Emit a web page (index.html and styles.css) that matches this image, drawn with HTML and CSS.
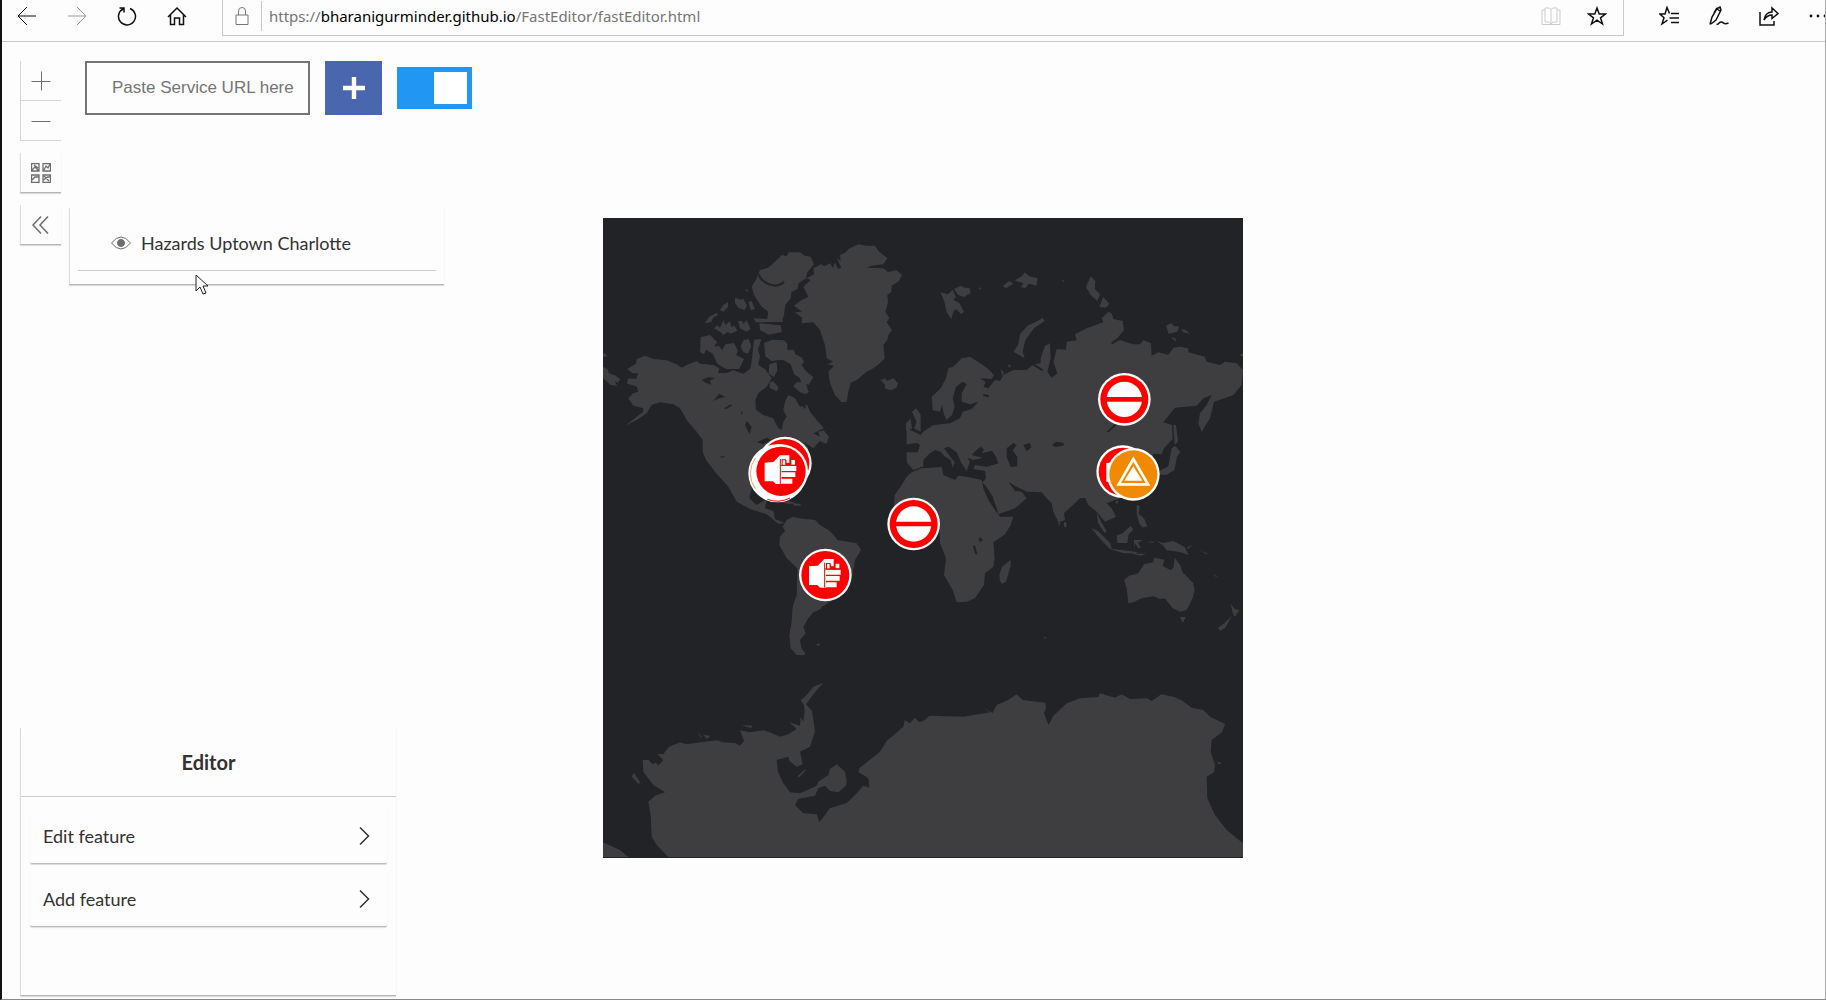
FILE: index.html
```html
<!DOCTYPE html>
<html lang="en">
<head>
<meta charset="utf-8">
<title>Fast Editor</title>
<meta name="viewport" content="width=device-width, initial-scale=1">
<link rel="stylesheet" href="styles.css">
</head>
<body>
<div class="window">
  <header class="toolbar">
    <nav class="nav-buttons" aria-label="Navigation">
      <button class="tool" type="button" aria-label="Back"><svg class="icon" viewBox="0 0 20 20"><path d="M19 10H1M10 1L1 10l9 9"/></svg></button>
      <button class="tool faded" type="button" aria-label="Forward"><svg class="icon" viewBox="0 0 20 20"><path d="M1 10h18M10 1l9 9-9 9"/></svg></button>
      <button class="tool" type="button" aria-label="Refresh"><svg class="icon" viewBox="0 0 20 20"><path class="bold" d="M13 2.500a8.500 8.500 0 1 1-6.500 .2M2.500 2h4.500v4.500"/></svg></button>
      <button class="tool" type="button" aria-label="Home"><svg class="icon" viewBox="0 0 20 20"><path class="bold" d="M1 11l9-9 9 9M3.500 9v9.500h4v-6.500h5v6.500h4V9"/></svg></button>
    </nav>
    <div class="address">
      <svg class="icon lock" viewBox="0 0 20 20"><path d="M4 9h12v9.500H4zM6.500 9V5a3.500 3.500 0 0 1 7 0v4"/></svg>
      <a class="url" href="https://bharanigurminder.github.io/FastEditor/fastEditor.html">https://<span class="host">bharanigurminder.github.io</span>/FastEditor/fastEditor.html</a>
      <button class="tool pale" type="button" aria-label="Reading view"><svg class="icon" viewBox="0 0 20 20"><path d="M10 3.500v15M10 3.500L8 2H4v14h4l2 2 2-2h4V2h-4zM4 4H1v14.500h18V4h-3"/></svg></button>
      <button class="tool favorite" type="button" aria-label="Add to favorites"><svg class="icon" viewBox="0 0 20 20"><path class="bold" d="M10 2l2.200 6H18.500l-5 3.800 2 6.200-5.500-3.800L4.500 18l2-6.200-5-3.800h6.300z"/></svg></button>
    </div>
    <div class="actions">
      <button class="tool" type="button" aria-label="Favorites"><svg class="icon" viewBox="0 0 20 20"><path class="bold" d="M12 7.500h8M10.500 12H20M12 16.500h8M10.500 7.500L8 1.500 6 8H0.800l4.200 3.800-2 6.200 5.500-3.800"/></svg></button>
      <button class="tool" type="button" aria-label="Add notes"><svg class="icon" viewBox="0 0 20 20"><path class="bold" d="M1 18.500L3 11 8 2.500l3-1.500 1 3-5 10-5 4M8 3l3 2M5 7l3-5M7.500 18.500c3 0 2.500-3 5-2.500s2 3 7 1"/></svg></button>
      <button class="tool" type="button" aria-label="Share"><svg class="icon" viewBox="0 0 20 20"><path class="bold" d="M1 6v13h14v-4M5 14c1-5 4-8 8-8V2l6 5.500-6 5V9c-4 0-6 2-8 5z"/></svg></button>
      <button class="tool more" type="button" aria-label="Settings and more"><svg class="icon dots" viewBox="0 0 20 20"><circle cx="3" cy="10" r="1.400"/><circle cx="10" cy="10" r="1.400"/><circle cx="17" cy="10" r="1.400"/></svg></button>
    </div>
  </header>

  <main class="view">
    <svg class="map" viewBox="0 0 1920 1920" role="img" aria-label="World map with hazard markers">
      <rect class="sea" width="1920" height="1920"/>
      <g transform="translate(-9 -9)">
        <path class="land" d="M640 158L650 155 662 148 674 154 690 145 700 160 704 142 714 162 724 158 710 128 722 138 720 120 738 112 745 102 775 88 800 92 825 92 835 108 862 130 850 148 815 152 800 158 850 160 865 172 888 165 907 180 895 200 875 212 874 230 862 240 864 262 856 290 868 310 860 322 876 345 865 360 862 375 850 390 854 430 840 445 820 460 800 470 770 495 752 503 745 530 740 560 725 562 705 540 690 505 685 470 702 452 682 448 700 440 680 430 675 390 668 370 660 345 640 322 605 325 606 308 585 292 606 290 582 272 600 258 625 245 610 215 632 195 620 190 642 178Z"/>
        <path class="land" d="M530 135L545 120 560 124 566 112 600 112 614 122 632 125 642 148 622 172 618 190 596 205 592 222 574 232 572 250 556 270 552 300 545 320 500 320 505 290 485 275 462 240 455 215 470 190 480 165 505 158Z"/>
        <path class="coast" d="M476 178Q485 205 525 212 545 210 552 200"/>
        <path class="land" d="M302 366l28-6 22 22-10 12 16 0 8 12 10-18 26-4 12 24-6 12 24 12-14 30-40 0-26-16-14-30-20-12-6 14-12-6zM314 325l14-20 22-12 4 8-14 6-6 14zM342 340l10-10 8 8 10-22 6 14 14-12 4 18 10-4 8 16-22 8-6-6-14 10-8-8zM370 270l14-8 0 14-14 14-10-4zM405 248l18 6 6-4 12 22-8 14-18-8-10-14zM414 318l12 0 4 8 10-10 12 26-12 8-12-6-8-4zM445 262l10-4 10 24-12 4zM460 310l90 4-2 6-80 2zM478 325l64 6 4 20-40 8-26-14zM430 376l16-4 8 22-10 22-14-4-8-18zM462 374l22-2-10 32 6 20-6 30-20-6zM492 384l24-10 36 2 10 10 0 20 20-2 4 14 20 10 6 14-8 8 16 20 20 16-14 24-8-4 8 26-10 6-16-6-20-18 10-12 14 0-6-14-16-10-10-30-24-14-34 4-18-14z"/>
        <path class="land" d="M508 448l22-6 2 24-10 20-16-10zM508 505l10-8 18 20-6 12-20-10zM435 225l8-4 0 10zM842 496l14-6 4 8 20-8 14 14-4 14-18 8-18-6 2-10zM9 415l10 2 2 8-12 0zM9 455l14 8 4 12 18 6 16 12-8 10-8-4 6 14-20-4-22-20z"/>
        <path class="land" d="M82 462L108 446 110 432 135 422 160 432 200 436 230 448 245 458 265 448 290 438 300 446 340 450 358 460 355 474 380 474 400 466 430 476 450 462 462 420 475 450 495 462 515 490 500 515 475 535 466 555 468 585 490 600 520 610 535 640 545 645 550 620 560 605 550 585 555 560 565 540 585 550 600 575 622 570 630 590 650 615 672 640 640 655 685 680 660 678 640 700 610 680 625 700 580 730 560 770 560 830 548 835 535 810 455 820 448 850 470 870 500 852 495 880 520 888 525 912 555 925 535 926 515 910 500 898 450 882 410 860 385 815 345 770 318 735 308 710 308 675 290 650 262 618 240 580 220 568 180 562 155 570 140 595 112 614 75 632 128 592 130 580 100 572 85 550 100 535 115 530 110 515 80 505 85 490 108 492 115 475 98 475Z"/>
        <path class="land" d="M655 650l16-4 16 20-8 20-16-6zM920 712H970V755H936L920 740zM918 625l14-14 4 30-18 6zM936 590l12-10 14 20 0 50-20-10 8-20z"/>
        <path class="lake" d="M305 495l20-8 20 2-16 8 6 12-18-6zM340 558l18-22 18 10-18 4zM372 580l20-12 4 4-18 10zM435 630l6-12 14 18-6 22zM422 590l6 0-2 10zM360 725l18-2-14 6zM470 682l30-14 14 6-24 14z"/>
        <path class="coast" d="M345 782L385 835M600 540L615 580"/>
        <path class="land" d="M545 860l24-2 20 8-30 0zM580 866l22 0 0 6-20 0z"/>
      </g>
      <g transform="translate(951 -9)">
        <path class="land" d="M62 232l22 6 14-14 10 22-8 8 18 10 14 26-8 8-16-16-8 8-6 22-14-20-6-28zM102 222l20-10 12 6 16 2 2 14-20 12-18-6zM174 218l10 0-4 6zM248 212l20-14 12 8-22 14zM285 196l20-12 10-12 12 12 26 6-4 22-22-6-12 14-12-4 8-12-18-4zM498 216l14-32 14 14-2 24 16 16-8 20-20-18zM538 276l12-30 18 20-10 12zM738 332l16-8 8 10 16 0-6 16-26 6zM784 342l14 4 12 10-20-4zM426 196l6 0 0 6zM752 366l14 4 4 12zM242 460l10 14-6 10zM262 448l12 4-6 6z"/>
        <path class="land" d="M280 410L294 390 300 358 322 332 348 320 368 308 374 318 342 340 316 376 308 410 314 430 294 418Z"/>
        <path class="land" d="M-38 715L-38 745-20 765 0 758 10 735 28 716 45 705 62 710 75 725 92 735 98 758 104 742 84 716 72 700 85 695 110 712 122 740 140 768 150 740 142 728 160 735 190 728 225 722 236 745 200 755 165 750 160 762 195 768 198 790 185 805 205 840 235 898 285 880 320 850 305 830 285 828 265 800 290 815 320 830 365 832 380 850 395 865 400 890 415 922 435 915 432 895 480 850 495 848 505 870 530 890 555 920 588 905 575 880 560 865 600 850 650 820 680 780 690 740 700 716 725 718 732 700 758 672 756 630 730 622 765 578 830 572 850 550 875 540 860 570 840 595 835 625 845 650 870 610 882 560 940 540 965 510 969 465 950 445 915 440 900 450 860 440 855 425 805 412 805 400 780 395 760 398 745 420 715 412 695 422 693 385 670 376 660 388 640 388 600 375 580 385 612 345 608 318 580 312 575 295 565 290 545 310 550 322 500 340 465 358 470 376 440 380 438 404 410 402 400 440 412 475 395 488 382 470 392 430 390 385 375 392 362 430 362 445 340 448 320 465 280 465 250 480 240 498 225 495 205 520 190 515 198 502 180 490 215 492 222 480 205 462 180 445 150 425 125 430 100 455 85 460 78 490 62 520 35 545 38 585 60 590 66 570 72 600 80 615 96 600 104 575 98 550 108 515 128 500 140 508 125 535 125 560 150 568 175 560 155 582 128 590 120 610 90 625 40 630 10 650-15 680 0 690-8 715Z"/>
        <path class="lake" d="M155 720l15-15 12-10 10 8-6 12 30-8 14 22-40 0zM260 700l20-16 10 6-12 16 14 20 0 28-20 2-12-30zM310 690l20-6 4 14-14 10zM396 690l12-10 24 4-2 8-26 4zM560 650l26-24 2 6-22 20zM185 800l12 12 20 30 18 52-16-12-24-44z"/>
        <path class="coast" d="M320 435L368 466M575 386L610 360M190 540L206 544"/>
        <path class="land" d="M760 630l8 0 6 50-10 10zM755 700l10-8 16 18-10 16-8 40-24 14-34-2 20-14 20-10zM415 916l6 10-4 8zM-40 640l22 10 28 14-20 20-30 4zM958 420l12-6v12z"/>
      </g>
      <g transform="translate(411 621)">
        <path class="land" d="M515 142L545 130 575 128 605 125 610 150 645 165 655 152 680 155 725 165 730 190 745 225 765 255 780 275 820 275 812 300 795 328 760 352 764 400 760 425 735 445 732 480 705 520 680 530 650 532 638 495 612 450 618 400 600 355 598 300 560 290 520 300 480 290 462 240 464 210 485 180 500 155ZM135 318L128 305 140 285 160 275 175 280 225 285 240 300 265 315 280 328 292 345 350 355 363 375 345 405 335 460 300 500 270 530 240 550 175 550 172 430 140 400 118 360 120 335Z"/>
        <path class="lake" d="M716 338l8 0 4 10-10 2zM698 360l8 4 6 24-6 0z"/>
      </g>
      <g transform="translate(-9 951)">
        <path class="land" d="M592 120L590 180 578 215 575 260 568 300 572 340 590 360 612 361 616 355 604 340 600 315 617 295 610 275 625 250 640 232 662 222 662 205 650 198 690 160 690 120ZM648 328l12-4-4 10zM94 724l8-10 18 26-4 8zM9 922l50 22 26 22H9zM425 570l32 2-4 8zM292 588l14 20-4 0zM310 600l22 2-12 10z"/>
        <path class="land" d="M205 966L170 930 155 905 152 840 145 800 165 782 195 772 160 750 130 710 128 675 146 675 158 688 168 682 174 692 190 676 172 656 190 658 206 636 240 622 260 628 330 618 352 616 366 622 405 624 420 632 432 618 420 586 450 592 490 586 510 592 540 605 565 598 590 582 568 562 600 572 602 545 610 560 614 530 612 510 602 496 620 480 640 455 670 443 640 478 618 508 636 528 645 590 630 635 600 650 608 688 590 695 568 678 565 665 530 675 534 710 550 745 570 772 600 775 650 752 655 740 685 720 690 702 710 688 735 710 740 738 738 752 715 772 690 768 675 752 655 760 645 782 595 792 585 810 610 835 650 838 658 862 690 820 740 804 765 780 790 752 808 758 806 732 796 724 775 712 778 700 840 650 860 618 910 575 914 555 930 565 945 548 958 562 970 558 988 542 1090 545 1170 532 1145 515 1178 534 1190 510 1225 495 1250 478 1268 495 1336 503 1338 520 1332 535 1346 570 1360 542 1400 505 1440 490 1494 486 1500 475 1545 488 1565 478 1590 492 1640 490 1655 498 1684 478 1720 485 1745 496 1775 518 1810 525 1830 545 1875 567 1866 592 1835 615 1832 650 1845 690 1842 712 1820 725 1822 790 1845 840 1880 885 1929 925V966Z"/>
        <path class="land" d="M592 724l22-20 4 2-20 20z"/>
      </g>
      <g transform="translate(951 951)">
        <path class="land" d="M612 135L628 122 655 115 672 88 700 82 702 68 734 74 728 92 752 106 760 98 764 68 780 90 788 112 820 145 824 165 818 190 800 225 780 230 758 220 735 190 720 192 700 184 665 190 640 202 625 205 620 160ZM780 246l18 0-10 18zM932 206l12 16 14 4-14 20-6-12zM894 278l20-14 22-22-20 36-16 10zM238 120L246 96 272 74 272 92 258 140 246 146 240 138zM370 307l10 0-4 5zM890 680l18 4-12 4z"/>
      </g>
      <g transform="translate(1131 621)">
        <path class="land" d="M334 310l20 8 36 36 6 18 54 6 22 4-4 4-40-2-38-12-26-26zM350 262l14 30 16 26-6 6-20-30zM410 330l16-4 26-24 8 12-14 14-4 26-30 0zM462 345l26 0-14 8 8 16-8 0-8-14-4 12zM530 348l20 6 30-6 34 18 12 24-30-10-36-4-10-14zM470 240l10 4-4 22 16 14 10 24-14 4-10-12-8-30zM252 290l8 4-2 14-6-4zM404 230l12-4-4 12zM460 386l40 0-20 6zM500 350l24 0-4 4zM620 368l18-8-14 12zM700 448l12 6-4 2zM660 376l24 10-4 2z"/>
      </g>

      <g transform="translate(546 736)"><circle class="white" r="80"/><circle class="red" r="73"/></g>
      <g transform="translate(523 766)"><circle class="white" r="87"/><path class="thin-orange" d="M-66-46a78 78 0 0 0 0 92"/><path class="thin-red" d="M-30 78a84 84 0 0 0 68-4"/></g>
      <g transform="translate(534 760)"><circle class="white" r="81"/><circle class="red" r="74"/><use href="#fist"/></g>
      <g transform="translate(667 1071)"><circle class="white" r="79"/><circle class="red" r="72"/><use href="#fist"/></g>
      <g transform="translate(932 918)"><use href="#closed"/></g>
      <g transform="translate(1564 544)"><use href="#closed"/></g>
      <g transform="translate(1559 761)"><circle class="white" r="79"/><circle class="red" r="72"/><use href="#fist"/></g>
      <g transform="translate(1591 769)"><circle class="white" r="79"/><circle class="orange" r="72"/><path class="triangle" d="M0-46L44 30H-44z"/><path class="white" d="M0-24L27 19H-27z"/></g>
      <defs>
        <g id="closed"><circle class="white" r="79"/><circle class="red" r="72"/><circle class="white" r="53"/><path class="red" d="M-60-7H60V7H-60z"/></g>
        <g id="fist"><path class="white" d="M-49-26l26-2 20-20H25v22H15v-10H2V38h-18l-8-8h-25zM31-34h11v14H31zM2-16H46V-1H2zM2 3H43V17H2zM2 22H34V37H2zM5-33h8v14H5z"/><path class="knuckle" d="M-2-37V38M-2-18H46M15-34v14H28"/></g>
      </defs>
    </svg>

    <div class="widgets">
      <section class="top">
        <div class="map-tools">
          <div class="zoom-tools">
            <button class="tile" type="button" aria-label="Zoom in"><svg class="icon" viewBox="0 0 20 20"><path d="M0.500 10.500h19M10.500 0.500v19"/></svg></button>
            <button class="tile" type="button" aria-label="Zoom out"><svg class="icon" viewBox="0 0 20 20"><path d="M0.500 10.500h19"/></svg></button>
          </div>
          <button class="tile single" type="button" aria-label="Basemap gallery"><svg class="icon gallery" viewBox="0 0 20 20"><path d="M0.500 0.500h7.500v7.500H0.500zM12 0.500h7.500v7.500H12zM0.500 12h7.500v7.500H0.500zM12 12h7.500v7.500H12zM1 7l3-3 4 4M3 2l4 3M13 7l2-4 2 2 2-4M1 17l3-3h4M13 13l5 5M12.500 17l4-3h3"/></svg></button>
          <button class="tile single" type="button" aria-label="Collapse layer list"><svg class="icon bold" viewBox="0 0 20 20"><path d="M10 1.500L2 10l8 8.500M17 1.500L9 10l8 8.500"/></svg></button>
        </div>
        <div class="content">
          <form class="service">
            <input class="service-url" type="text" placeholder="Paste Service URL here" aria-label="Service URL">
            <button class="add" type="button" aria-label="Add service"><svg class="icon" viewBox="0 0 20 20"><path d="M10 0v20M0 10h20"/></svg></button>
            <input class="switch" type="checkbox" checked aria-label="Show widgets">
          </form>
          <ul class="layers">
            <li class="layer">
              <svg class="icon eye" viewBox="0 0 20 20"><path d="M0.500 10Q10-2 19.500 10 10 22 0.500 10z"/><circle cx="10" cy="10" r="3.500"/></svg>
              <span>Hazards Uptown Charlotte</span>
              <svg class="pointer" viewBox="0 0 13 21"><path d="M1 1v16l4-4 3 7 3-1-3-7h5z"/></svg>
            </li>
          </ul>
        </div>
      </section>
      <section class="editor">
        <h2 class="editor-title">Editor</h2>
        <div class="editor-body">
          <button class="row" type="button">Edit feature<svg class="icon bold" viewBox="0 0 20 20"><path d="M5 1.500l8.500 8.500L5 18.500"/></svg></button>
          <button class="row" type="button">Add feature<svg class="icon bold" viewBox="0 0 20 20"><path d="M5 1.500l8.500 8.500L5 18.500"/></svg></button>
        </div>
      </section>
    </div>
  </main>
</div>
</body>
</html>
```
FILE: styles.css
```css
* {
  box-sizing: border-box;
}

body {
  margin: 0;
  background: #fdfdfd;
  color: #323232;
  font-family: Lato, "Liberation Sans", sans-serif;
  font-size: 18px;
}

button {
  padding: 0;
  border: 0;
  background: transparent;
  color: inherit;
  font: inherit;
}

.window {
  display: flex;
  flex-direction: column;
  min-height: 100vh;
  overflow: hidden;
  border-left: 2px solid #111;
  border-right: 1px solid #aaa;
  border-bottom: 1px solid #888;
}

.icon {
  display: block;
  flex: none;
  width: 20px;
  height: 20px;
  fill: none;
  stroke: currentColor;
}

.bold {
  stroke-width: 1.5;
}

/* Browser toolbar */

.toolbar {
  display: flex;
  height: 42px;
  border-bottom: 1px solid #c8c8c8;
  color: #111;
}

.nav-buttons,
.actions {
  display: flex;
}

.nav-buttons {
  margin-right: 20px;
}

.actions {
  margin-left: 20px;
}

.tool {
  display: flex;
  align-items: center;
  justify-content: center;
  width: 50px;
  height: 32px;
}

.faded {
  color: #999;
}

.pale {
  width: 40px;
  color: #ccc;
}

.favorite {
  width: 52px;
}

.more {
  width: 31px;
  justify-content: flex-start;
  padding-left: 14px;
}

.dots {
  fill: currentColor;
  stroke: none;
}

.address {
  display: flex;
  flex: 1;
  align-items: center;
  height: 36px;
  padding-bottom: 3px;
  border: solid #c8c8c8;
  border-width: 0 1px 1px;
}

.lock {
  margin: 0 9px;
  color: #777;
}

.url {
  flex: 1;
  padding-left: 7px;
  border-left: 1px solid #c8c8c8;
  color: #767676;
  font-family: "Noto Sans", "Open Sans", sans-serif;
  font-size: 15px;
  line-height: 30px;
  text-decoration: none;
}

.host {
  color: #000;
}

/* Map with the widgets laid over it */

.view {
  display: grid;
  flex: 1;
  padding: 19px 0 3px 18px;
}

.map {
  grid-area: 1 / 1;
  place-self: center;
  width: 640px;
  max-width: 100%;
  margin-top: 19px;
}

.sea,
.lake {
  fill: #222326;
}

.land {
  fill: #3e3e40;
}

.coast {
  fill: none;
  stroke: #222326;
  stroke-width: 6;
}

.white {
  fill: #fff;
}

.red {
  fill: #f00;
}

.orange {
  fill: #f08a00;
}

.triangle,
.knuckle,
.thin-orange,
.thin-red {
  fill: none;
  stroke-width: 3;
}

.triangle {
  stroke: #fff;
  stroke-width: 8;
}

.knuckle,
.thin-red {
  stroke: #f00;
}

.thin-orange {
  stroke: #e8a860;
}

.widgets {
  grid-area: 1 / 1;
  display: flex;
  flex-direction: column;
  justify-content: space-between;
  align-items: flex-start;
  gap: 32px;
}

.top {
  display: flex;
  gap: 8px;
}

.map-tools {
  display: flex;
  flex-direction: column;
  gap: 12px;
  width: 41px;
}

.tile {
  display: flex;
  align-items: center;
  justify-content: center;
  width: 100%;
  height: 40px;
  border: solid #d4d4d4;
  border-width: 0 0 1px 1px;
  color: #6e6e6e;
}

.single {
  border-color: #ddd #ddd #b4b4b4;
  box-shadow: 0 1px 1px #ddd;
}

.gallery {
  stroke-width: 1.3;
}

.service {
  display: flex;
  align-items: center;
  gap: 15px;
  padding-left: 16px;
}

.service-url {
  width: 225px;
  height: 54px;
  padding: 0 0 0 25px;
  border: 2px solid #757575;
  background: #fdfdfd;
  font: 17px "Liberation Sans", Arial, sans-serif;
}

.service-url::placeholder {
  color: #757575;
  opacity: 1;
}

.add {
  display: flex;
  align-items: center;
  justify-content: center;
  width: 57px;
  height: 54px;
  background: #4a66ae;
  color: #fff;
}

.add .icon {
  width: 22px;
  height: 22px;
  stroke-width: 4;
}

.switch {
  display: flex;
  justify-content: flex-end;
  width: 75px;
  height: 42px;
  margin: 0;
  padding: 5px;
  appearance: none;
  background: #2196f3;
}

.switch::before {
  content: "";
  width: 33px;
  background: #fff;
}

.layers {
  width: 375px;
  margin: 93px 0 0;
  padding: 7px 8px 13px;
  border: solid #ddd;
  border-width: 0 0 1px 1px;
  border-bottom-color: #b4b4b4;
  box-shadow: 0 1px 1px #ddd;
  list-style: none;
}

.layer {
  position: relative;
  display: flex;
  align-items: center;
  gap: 10px;
  height: 56px;
  padding-left: 33px;
  border-bottom: 1px solid #ccc;
}

.eye {
  color: #6e6e6e;
}

.eye circle {
  fill: currentColor;
}

.pointer {
  position: absolute;
  top: 59px;
  left: 117px;
  width: 13px;
  height: 21px;
  fill: #fff;
  stroke: #222;
}

.editor {
  width: 376px;
  min-height: 268px;
  border: solid #ddd;
  border-width: 0 0 1px 1px;
  border-bottom-color: #b4b4b4;
  box-shadow: 0 1px 1px #ddd;
}

.editor-title {
  margin: 0;
  border-bottom: 1px solid #ccc;
  font-size: 20px;
  font-weight: 700;
  line-height: 68px;
  text-align: center;
}

.editor-body {
  display: flex;
  flex-direction: column;
  gap: 8px;
  padding: 12px 9px;
}

.row {
  display: flex;
  align-items: center;
  justify-content: space-between;
  height: 55px;
  padding: 0 12px 0 13px;
  border-bottom: 1px solid #bbb;
  border-radius: 2px;
  box-shadow: 0 1px 1px #ddd;
}
```
